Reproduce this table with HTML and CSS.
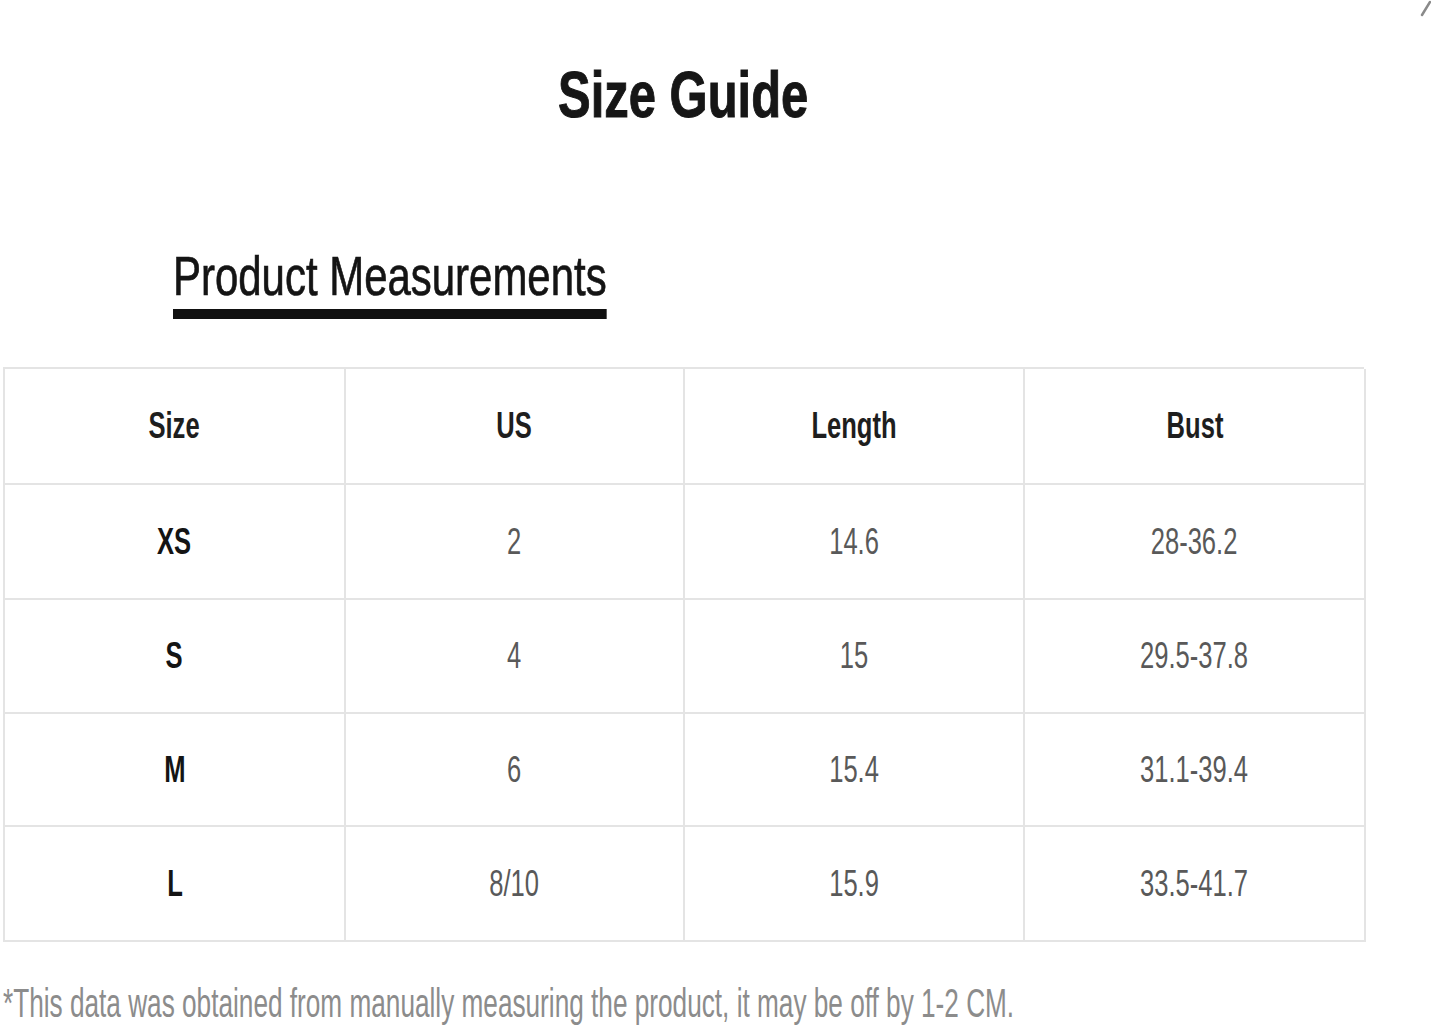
FILE: index.html
```html
<!DOCTYPE html>
<html lang="en">
<head>
<meta charset="utf-8">
<title>Size Guide</title>
<link rel="stylesheet" href="styles.css">
</head>
<body>
<div class="page">
  <h1 class="title"><span class="title-text">Size Guide</span></h1>
  <div class="section-head">
    <h2 class="section-title">Product Measurements</h2>
  </div>
  <div class="grid">
    <div class="cell head"><span class="txt">Size</span></div>
    <div class="cell head"><span class="txt">US</span></div>
    <div class="cell head"><span class="txt">Length</span></div>
    <div class="cell head"><span class="txt">Bust</span></div>

    <div class="cell key"><span class="txt">XS</span></div>
    <div class="cell val"><span class="txt">2</span></div>
    <div class="cell val"><span class="txt">14.6</span></div>
    <div class="cell val"><span class="txt">28-36.2</span></div>

    <div class="cell key"><span class="txt">S</span></div>
    <div class="cell val"><span class="txt">4</span></div>
    <div class="cell val"><span class="txt">15</span></div>
    <div class="cell val"><span class="txt">29.5-37.8</span></div>

    <div class="cell key"><span class="txt">M</span></div>
    <div class="cell val"><span class="txt">6</span></div>
    <div class="cell val"><span class="txt">15.4</span></div>
    <div class="cell val"><span class="txt">31.1-39.4</span></div>

    <div class="cell key"><span class="txt">L</span></div>
    <div class="cell val"><span class="txt">8/10</span></div>
    <div class="cell val"><span class="txt">15.9</span></div>
    <div class="cell val"><span class="txt">33.5-41.7</span></div>
  </div>
  <p class="note"><span class="note-text">*This data was obtained from manually measuring the product, it may be off by 1-2 CM.</span></p>
</div>
<svg class="corner" width="12" height="18" viewBox="0 0 12 18"><line x1="3" y1="15" x2="11" y2="2" stroke="#8a8a8a" stroke-width="2.5" stroke-linecap="round"/></svg>
</body>
</html>
```
FILE: styles.css
```css
html, body {
  margin: 0;
  padding: 0;
  background: #ffffff;
}

body {
  font-family: "Liberation Sans", Arial, sans-serif;
  overflow: hidden;
  position: relative;
  width: 1431px;
  height: 1031px;
}

.page {
  width: 1361px;
  margin-left: 3px;
}

.title {
  margin: 0;
  padding-top: 62px;
  font-size: 65px;
  line-height: 65px;
  font-weight: 700;
  color: #161616;
  -webkit-text-stroke: 1px #161616;
  text-align: center;
}

.title-text {
  display: inline-block;
  transform: scaleX(0.753);
  transform-origin: center;
  white-space: nowrap;
}

.section-head {
  margin-top: 121px;
  padding-left: 170px;
  height: 72px;
}

.section-title {
  display: inline-block;
  margin: 0;
  font-size: 56px;
  line-height: 56px;
  font-weight: 400;
  color: #141414;
  -webkit-text-stroke: 0.7px #141414;
  white-space: nowrap;
  padding-bottom: 5px;
  border-bottom: 10px solid #111111;
  transform: scaleX(0.749);
  transform-origin: left top;
}

.grid {
  margin-top: 47px;
  display: grid;
  grid-template-columns: 341px 339px 340px 341px;
  grid-template-rows: 116px 115px 114px 113px 115px;
  border-top: 2px solid #e4e4e4;
  border-left: 2px solid #e4e4e4;
  box-sizing: border-box;
}

.cell {
  box-sizing: border-box;
  border-right: 2px solid #e4e4e4;
  border-bottom: 2px solid #e4e4e4;
  display: flex;
  align-items: center;
  justify-content: center;
  font-size: 36px;
  line-height: 36px;
}

.txt {
  display: inline-block;
  transform: scaleX(0.71);
  transform-origin: center;
  white-space: nowrap;
}

.head {
  font-weight: 700;
  color: #1e1e1e;
}

.key {
  font-weight: 700;
  color: #141414;
}

.val {
  font-weight: 400;
  color: #595959;
}

.note {
  margin: 41px 0 0 0;
  font-size: 26.2px;
  line-height: 26.2px;
  height: 40px;
  color: #8c8c8c;
  white-space: nowrap;
}

.note-text {
  display: inline-block;
  vertical-align: top;
  transform: scaleY(1.527);
  transform-origin: left top;
}

.corner {
  position: absolute;
  top: 0;
  right: 0;
}
```
